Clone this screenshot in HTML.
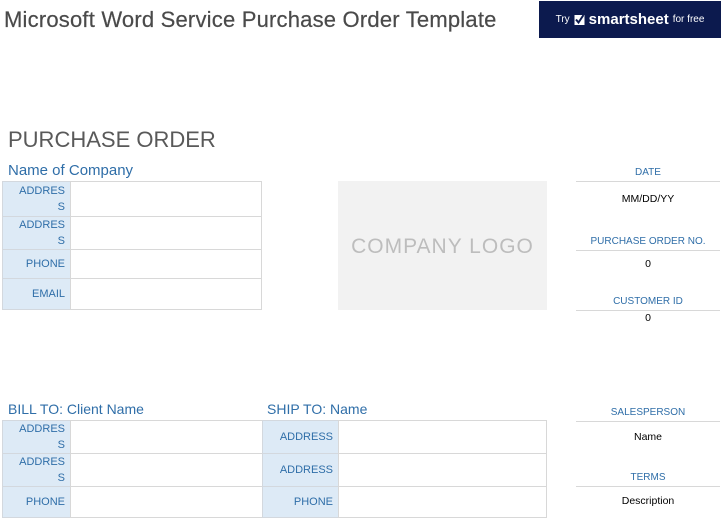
<!DOCTYPE html>
<html><head><meta charset="utf-8"><style>
*{margin:0;padding:0;box-sizing:border-box}
body{width:724px;height:519px;background:#fff;font-family:"Liberation Sans",Arial,sans-serif;position:relative;overflow:hidden}
.a{position:absolute}
.t{color:#2f6ea8}
.lbl{position:absolute;background:#ddeaf6;border:1px solid #d3d8de;color:#2f6ea8;font-size:11px;text-align:right;padding-right:5px;display:flex;flex-direction:column;justify-content:center;align-items:flex-end;line-height:16px}
.val{position:absolute;border:1px solid #d8d8d8;background:#fff}
.rh{position:absolute;left:576px;width:144px;text-align:center;font-size:10px;color:#2f6ea8;border-bottom:1px solid #d8d8d8;padding-bottom:3px}
.rv{position:absolute;left:576px;width:144px;text-align:center;font-size:10.5px;color:#000}
</style></head><body>
<div class="a" style="left:4px;top:7px;font-size:22px;color:#4a4a4a;letter-spacing:0.2px;-webkit-text-stroke:0.2px #4a4a4a">Microsoft Word Service Purchase Order Template</div>
<div class="a" style="left:539px;top:1px;width:182px;height:37px;background:#0c1a4e;color:#fff;display:flex;align-items:center;justify-content:center;gap:4px">
<span style="font-size:10px">Try</span>
<svg width="11" height="11" viewBox="0 0 11 11"><rect x="0.5" y="1" width="10" height="10" fill="#fff"/><path d="M2 5.5 L4.5 8.5 L9.5 1" stroke="#0c1a4e" stroke-width="2" fill="none"/></svg>
<span style="font-size:15px;font-weight:bold">smartsheet</span><span style="font-size:10px">for free</span></div>
<div class="a" style="left:8px;top:127px;font-size:22px;color:#595959">PURCHASE ORDER</div>
<div class="a t" style="left:8px;top:162px;font-size:15px">Name of Company</div>

<div class="lbl" style="left:2px;top:181px;width:69px;height:36px">ADDRES<br>S</div>
<div class="val" style="left:70px;top:181px;width:192px;height:36px"></div>
<div class="lbl" style="left:2px;top:216px;width:69px;height:34px">ADDRES<br>S</div>
<div class="val" style="left:70px;top:216px;width:192px;height:34px"></div>
<div class="lbl" style="left:2px;top:249px;width:69px;height:30px">PHONE</div>
<div class="val" style="left:70px;top:249px;width:192px;height:30px"></div>
<div class="lbl" style="left:2px;top:278px;width:69px;height:32px">EMAIL</div>
<div class="val" style="left:70px;top:278px;width:192px;height:32px"></div>

<div class="a" style="left:338px;top:181px;width:209px;height:129px;background:#f2f2f2;color:#bdbdbd;font-size:21px;display:flex;align-items:center;justify-content:center;letter-spacing:1px;padding-top:2px">COMPANY LOGO</div>

<div class="rh" style="top:167px">DATE</div>
<div class="rv" style="top:193px">MM/DD/YY</div>
<div class="rh" style="top:236px">PURCHASE ORDER NO.</div>
<div class="rv" style="top:258px">0</div>
<div class="rh" style="top:296px">CUSTOMER ID</div>
<div class="rv" style="top:312px">0</div>

<div class="a t" style="left:8px;top:401px;font-size:14px">BILL TO: Client Name</div>
<div class="a t" style="left:267px;top:401px;font-size:14px">SHIP TO: Name</div>

<div class="lbl" style="left:2px;top:420px;width:69px;height:34px">ADDRES<br>S</div>
<div class="val" style="left:70px;top:420px;width:193px;height:34px"></div>
<div class="lbl" style="left:2px;top:453px;width:69px;height:34px">ADDRES<br>S</div>
<div class="val" style="left:70px;top:453px;width:193px;height:34px"></div>
<div class="lbl" style="left:2px;top:486px;width:69px;height:32px">PHONE</div>
<div class="val" style="left:70px;top:486px;width:193px;height:32px"></div>

<div class="lbl" style="left:262px;top:420px;width:77px;height:34px">ADDRESS</div>
<div class="val" style="left:338px;top:420px;width:209px;height:34px"></div>
<div class="lbl" style="left:262px;top:453px;width:77px;height:34px">ADDRESS</div>
<div class="val" style="left:338px;top:453px;width:209px;height:34px"></div>
<div class="lbl" style="left:262px;top:486px;width:77px;height:32px">PHONE</div>
<div class="val" style="left:338px;top:486px;width:209px;height:32px"></div>

<div class="rh" style="top:407px">SALESPERSON</div>
<div class="rv" style="top:431px">Name</div>
<div class="rh" style="top:472px">TERMS</div>
<div class="rv" style="top:495px">Description</div>
</body></html>
